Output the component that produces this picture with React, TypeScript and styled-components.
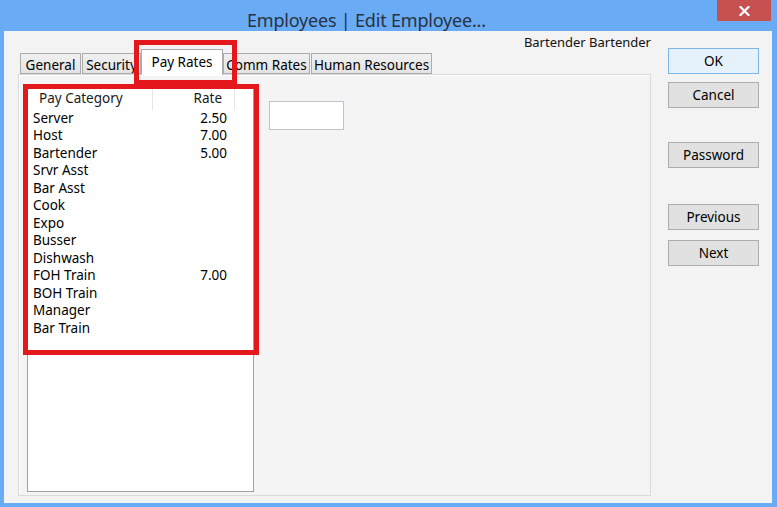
import React from "react";
import styled, { createGlobalStyle } from "styled-components";

const GlobalStyle = createGlobalStyle`
  html, body {
    margin: 0;
    padding: 0;
    background: #6aabf5;
  }
  * { box-sizing: border-box; }
`;

const FONT = `"Noto Sans", "Open Sans", "DejaVu Sans", sans-serif`;

const Window = styled.div`
  width: 777px;
  height: 507px;
  background: #6aabf5;
  display: flex;
  flex-direction: column;
  font-family: ${FONT};
  overflow: hidden;
`;

const TitleBar = styled.div`
  height: 31px;
  display: flex;
  align-items: flex-start;
  flex-shrink: 0;
`;

const Title = styled.div`
  margin-left: 247px;
  padding-top: 8px;
  line-height: 24px;
  font-size: 18px;
  color: #27323f;
  white-space: nowrap;
  letter-spacing: -0.2px;
`;

const CloseButton = styled.div`
  margin-left: auto;
  margin-right: 6px;
  width: 54px;
  height: 21px;
  background: #c75050;
  display: flex;
  align-items: center;
  justify-content: center;
`;

const Client = styled.div`
  position: relative;
  flex: 1;
  margin: 0 5px 4px 4px;
  background: #f3f3f3;
  display: flex;
  padding-left: 14px;
`;

const LeftPane = styled.div`
  width: 633px;
  display: flex;
  flex-direction: column;
  padding-bottom: 7px;
`;

const NameRow = styled.div`
  margin-top: 3px;
  height: 16px;
  line-height: 16px;
  text-align: right;
  font-size: 13px;
  color: #111;
  white-space: nowrap;
`;

const TabStrip = styled.div`
  position: relative;
  z-index: 1;
  margin-top: -1px;
  margin-bottom: -1px;
  height: 26px;
  padding-left: 2px;
  display: flex;
  align-items: flex-end;
`;

const Tab = styled.div<{ $w: number; $active?: boolean; $gap?: number }>`
  width: ${(p) => p.$w}px;
  margin-left: ${(p) => p.$gap ?? 0}px;
  height: ${(p) => (p.$active ? 26 : 21)}px;
  margin-bottom: ${(p) => (p.$active ? 0 : 1)}px;
  border: 1px solid #acacac;
  border-bottom: ${(p) => (p.$active ? "none" : "1px solid #acacac")};
  background: ${(p) =>
    p.$active ? "#ffffff" : "linear-gradient(#f0f0f0, #e3e3e3)"};
  font-size: 13.5px;
  line-height: 17px;
  color: #000;
  display: flex;
  align-items: flex-start;
  padding-top: ${(p) => (p.$active ? 4 : 3)}px;
  justify-content: center;
  white-space: nowrap;
  overflow: hidden;
`;

const Panel = styled.div`
  flex: 1;
  border: 1px solid #d9dadb;
  box-shadow: inset 1px 1px 0 #ffffff;
  background: #f4f4f4;
  display: flex;
  align-items: flex-start;
  padding: 11px 0 0 8px;
`;

const ListView = styled.div`
  width: 227px;
  height: 406px;
  background: #ffffff;
  border: 1px solid #a0a0a0;
  font-size: 13.5px;
  color: #000;
`;

const HeaderRow = styled.div`
  display: grid;
  grid-template-columns: 125px 82px;
  height: 22.5px;
`;

const HeaderCell = styled.div<{ $right?: boolean }>`
  border-right: 1px solid #e5e5e5;
  line-height: 23px;
  padding: ${(p) => (p.$right ? "0 12px 0 0" : "0 0 0 11px")};
  text-align: ${(p) => (p.$right ? "right" : "left")};
  color: #1a1a1a;
  white-space: nowrap;
`;

const Row = styled.div`
  display: grid;
  grid-template-columns: 125px 82px;
  height: 17.5px;
  line-height: 17.5px;
`;

const Cell = styled.div<{ $right?: boolean }>`
  padding: ${(p) => (p.$right ? "0 8px 0 0" : "0 0 0 5px")};
  text-align: ${(p) => (p.$right ? "right" : "left")};
  white-space: nowrap;
`;

const TextInput = styled.div`
  margin: 15px 0 0 15px;
  width: 75px;
  height: 29px;
  background: #ffffff;
  border: 1px solid #bfc4ca;
`;

const RightPane = styled.div`
  margin-left: 17px;
  width: 91px;
  display: flex;
  flex-direction: column;
`;

const Button = styled.div<{ $top: number; $default?: boolean; $h?: number }>`
  margin-top: ${(p) => p.$top}px;
  height: ${(p) => p.$h ?? 26}px;
  background: ${(p) => (p.$default ? "#e5f1fb" : "#e1e1e1")};
  border: 1px solid ${(p) => (p.$default ? "#7db5ea" : "#adadad")};
  font-size: 13.5px;
  color: #000;
  display: flex;
  align-items: center;
  justify-content: center;
`;

const Highlight = styled.div<{ $l: number; $t: number; $w: number; $h: number }>`
  position: absolute;
  left: ${(p) => p.$l}px;
  top: ${(p) => p.$t}px;
  width: ${(p) => p.$w}px;
  height: ${(p) => p.$h}px;
  border: 5px solid #e4171d;
  z-index: 5;
  pointer-events: none;
`;

const rates: [string, string][] = [
  ["Server", "2.50"],
  ["Host", "7.00"],
  ["Bartender", "5.00"],
  ["Srvr Asst", ""],
  ["Bar Asst", ""],
  ["Cook", ""],
  ["Expo", ""],
  ["Busser", ""],
  ["Dishwash", ""],
  ["FOH Train", "7.00"],
  ["BOH Train", ""],
  ["Manager", ""],
  ["Bar Train", ""],
];

export default function App() {
  return (
    <>
      <GlobalStyle />
      <Window>
        <TitleBar>
          <Title>Employees | Edit Employee...</Title>
          <CloseButton>
            <svg width="11" height="10" viewBox="0 0 11 10">
              <path
                d="M1.5 1 L9.5 9 M9.5 1 L1.5 9"
                stroke="#ffffff"
                strokeWidth="2.2"
                strokeLinecap="square"
              />
            </svg>
          </CloseButton>
        </TitleBar>
        <Client>
          <LeftPane>
            <NameRow>Bartender Bartender</NameRow>
            <TabStrip>
              <Tab $w={61}>General</Tab>
              <Tab $w={59} $gap={1}>Security</Tab>
              <Tab $w={82} $active>Pay Rates</Tab>
              <Tab $w={87}>Comm Rates</Tab>
              <Tab $w={121} $gap={1}>Human Resources</Tab>
            </TabStrip>
            <Panel>
              <ListView>
                <HeaderRow>
                  <HeaderCell>Pay Category</HeaderCell>
                  <HeaderCell $right>Rate</HeaderCell>
                </HeaderRow>
                {rates.map(([name, rate]) => (
                  <Row key={name}>
                    <Cell>{name}</Cell>
                    <Cell $right>{rate}</Cell>
                  </Row>
                ))}
              </ListView>
              <TextInput />
            </Panel>
          </LeftPane>
          <RightPane>
            <Button $top={17} $default>OK</Button>
            <Button $top={8}>Cancel</Button>
            <Button $top={34}>Password</Button>
            <Button $top={36}>Previous</Button>
            <Button $top={10}>Next</Button>
          </RightPane>
          <Highlight $l={130} $t={9} $w={103} $h={45} />
          <Highlight $l={19} $t={53} $w={236} $h={271} />
        </Client>
      </Window>
    </>
  );
}
